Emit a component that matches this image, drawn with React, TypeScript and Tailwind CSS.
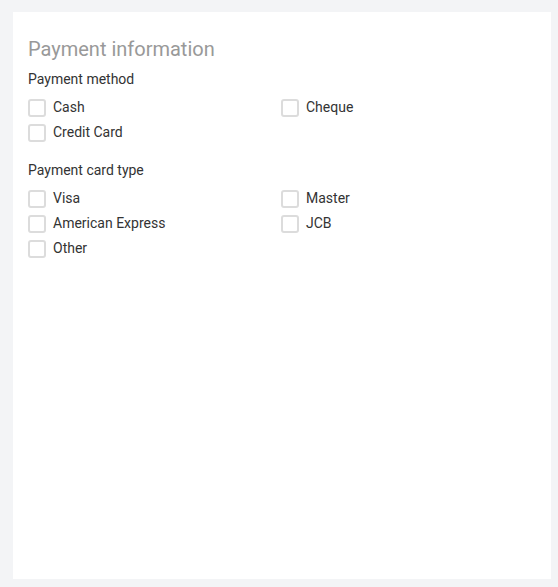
import React from "react";

function Check({ label }: { label: string }) {
  return (
    <label className="flex items-center h-[25px] gap-[7px] cursor-pointer">
      <span className="w-[18px] h-[18px] border-2 border-[#dcdcdc] rounded-[3px] bg-white shrink-0" />
      <span className="text-[14px] text-[#333333]">{label}</span>
    </label>
  );
}

export default function App() {
  return (
    <div
      className="w-[558px] h-[587px] bg-[#f3f4f6] pt-[12px] pl-[13px] pr-[7px] pb-[8px]"
      style={{ fontFamily: "Roboto, 'Noto Sans', sans-serif" }}
    >
      <div className="bg-white h-full px-[15px] pt-[24px]">
        <h1 className="text-[20px] leading-[26px] text-[#999999] font-normal">Payment information</h1>
        <div className="text-[14px] text-[#333333] mt-[7px] leading-[20px]">Payment method</div>
        <div className="grid grid-cols-[253px_1fr] mt-[6px]">
          <Check label="Cash" />
          <Check label="Cheque" />
          <Check label="Credit Card" />
        </div>
        <div className="text-[14px] text-[#333333] mt-[15px] leading-[20px]">Payment card type</div>
        <div className="grid grid-cols-[253px_1fr] mt-[6px]">
          <Check label="Visa" />
          <Check label="Master" />
          <Check label="American Express" />
          <Check label="JCB" />
          <Check label="Other" />
        </div>
      </div>
    </div>
  );
}
